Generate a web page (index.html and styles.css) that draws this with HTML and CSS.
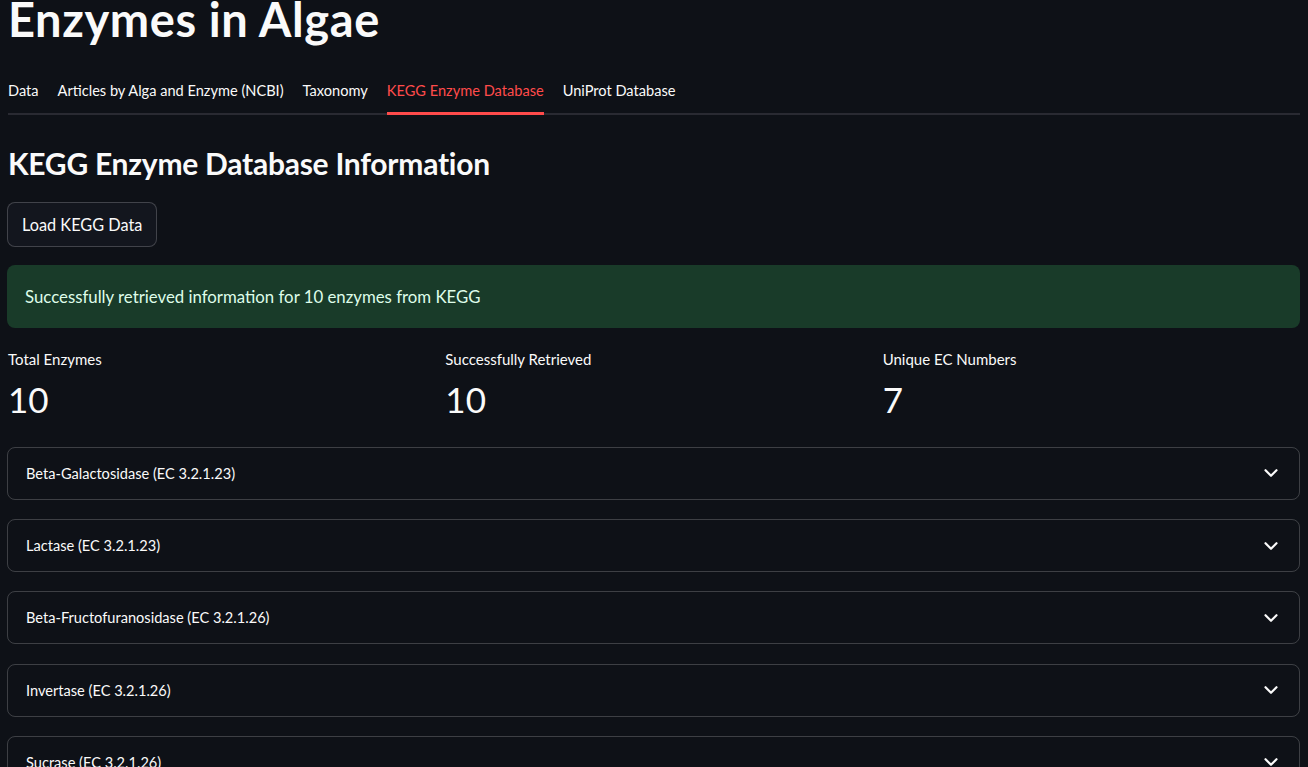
FILE: index.html
```html
<!DOCTYPE html>
<html>
<head>
<meta charset="utf-8">
<link rel="stylesheet" href="styles.css">
</head>
<body>
<main class="main">
  <h1 class="title">Enzymes in Algae</h1>
  <nav class="tabs">
    <span class="tab">Data</span>
    <span class="tab">Articles by Alga and Enzyme (NCBI)</span>
    <span class="tab">Taxonomy</span>
    <span class="tab active">KEGG Enzyme Database</span>
    <span class="tab">UniProt Database</span>
  </nav>
  <h2 class="subtitle">KEGG Enzyme Database Information</h2>
  <button class="btn">Load KEGG Data</button>
  <div class="alert">Successfully retrieved information for 10 enzymes from KEGG</div>
  <section class="metrics">
    <div class="metric"><div class="metric-label">Total Enzymes</div><div class="metric-value">10</div></div>
    <div class="metric"><div class="metric-label">Successfully Retrieved</div><div class="metric-value">10</div></div>
    <div class="metric"><div class="metric-label">Unique EC Numbers</div><div class="metric-value">7</div></div>
  </section>
  <section class="expanders">
    <div class="expander"><span>Beta-Galactosidase (EC 3.2.1.23)</span><svg class="chev" viewBox="0 0 24 24"><path d="M6 9l6 6 6-6"/></svg></div>
    <div class="expander"><span>Lactase (EC 3.2.1.23)</span><svg class="chev" viewBox="0 0 24 24"><path d="M6 9l6 6 6-6"/></svg></div>
    <div class="expander"><span>Beta-Fructofuranosidase (EC 3.2.1.26)</span><svg class="chev" viewBox="0 0 24 24"><path d="M6 9l6 6 6-6"/></svg></div>
    <div class="expander"><span>Invertase (EC 3.2.1.26)</span><svg class="chev" viewBox="0 0 24 24"><path d="M6 9l6 6 6-6"/></svg></div>
    <div class="expander"><span>Sucrase (EC 3.2.1.26)</span><svg class="chev" viewBox="0 0 24 24"><path d="M6 9l6 6 6-6"/></svg></div>
  </section>
</main>
</body>
</html>
```
FILE: styles.css
```css
html, body {
  margin: 0;
  background: #0e1117;
  color: #fafafa;
  font-family: Lato, "Noto Sans", sans-serif;
  overflow: hidden;
}
.main {
  padding: 0 8px;
}
.title {
  margin: -9px 0 0 0;
  font-size: 47px;
  letter-spacing: 0.6px;
  line-height: 1.2;
  font-weight: 700;
}
.tabs {
  display: flex;
  gap: 19px;
  margin-top: 20.6px;
  height: 45px;
  border-bottom: 2px solid #292a32;
}
.tab {
  position: relative;
  font-size: 14.6px;
  line-height: 45px;
  color: #fafafa;
}
.tab.active {
  color: #ff4b4b;
}
.tab.active::after {
  content: "";
  position: absolute;
  left: 0;
  right: 0;
  bottom: -2px;
  height: 3px;
  background: #ff4b4b;
}
.subtitle {
  margin: 28.4px 0 0 0;
  font-size: 30px;
  letter-spacing: -0.25px;
  line-height: 40px;
  font-weight: 700;
}
.btn {
  display: block;
  margin: 18.6px 0 0 -1px;
  height: 45px;
  padding: 0 14px;
  background: #13161e;
  color: #fafafa;
  border: 1px solid rgba(250, 250, 250, 0.2);
  border-radius: 8px;
  font-family: inherit;
  font-size: 16.3px;
}
.alert {
  margin: 18px 0 0 -1px;
  height: 63px;
  display: flex;
  align-items: center;
  padding: 0 18px;
  background: #193b29;
  color: #dffde9;
  border-radius: 8px;
  font-size: 16.8px;
}
.metrics {
  display: grid;
  grid-template-columns: repeat(3, 1fr);
  gap: 20px;
  margin-top: 20.2px;
}
.metric-label {
  font-size: 15px;
  line-height: 22px;
}
.metric-value {
  font-size: 35px;
  line-height: 44px;
  margin-top: 7px;
}
.expanders {
  display: flex;
  flex-direction: column;
  gap: 19.25px;
  margin: 25.8px 0 0 -1px;
}
.expander {
  height: 53px;
  box-sizing: border-box;
  border: 1px solid rgba(250, 250, 250, 0.2);
  border-radius: 8px;
  display: flex;
  align-items: center;
  justify-content: space-between;
  padding: 0 17px 0 18px;
  font-size: 14.6px;
}
.chev {
  width: 22px;
  height: 22px;
  fill: none;
  stroke: #fafafa;
  stroke-width: 2.4;
  stroke-linecap: round;
  stroke-linejoin: round;
}
```
